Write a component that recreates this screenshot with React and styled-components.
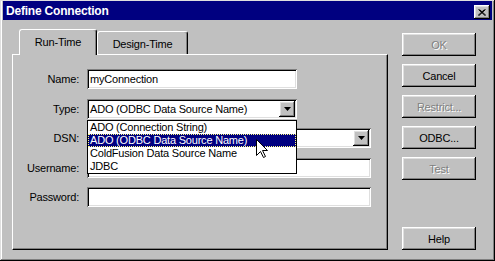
import React from "react"
import styled, { createGlobalStyle, css } from "styled-components"

const GlobalStyle = createGlobalStyle`
  html, body {
    margin: 0;
    padding: 0;
    background: #c0c0c0;
  }
  body {
    font-family: "Liberation Sans", Arial, sans-serif;
    font-size: 11px;
    letter-spacing: -0.2px;
    color: #000;
  }
`

const raised = css`
  background: #c0c0c0;
  box-shadow: inset -1px -1px #000, inset 1px 1px #fff, inset -2px -2px #808080,
    inset 2px 2px #dfdfdf;
`

const sunken = css`
  background: #fff;
  box-shadow: inset 1px 1px #808080, inset -1px -1px #fff, inset 2px 2px #000,
    inset -2px -2px #dfdfdf;
`

const Window = styled.div`
  width: 495px;
  height: 261px;
  box-sizing: border-box;
  padding: 1px 3px 3px 3px;
  background: #c0c0c0;
  display: flex;
  flex-direction: column;
  box-shadow: inset -1px -1px #000, inset 1px 1px #dfdfdf, inset -2px -2px #808080,
    inset 2px 0 #fff;
`

const TitleBar = styled.div`
  height: 19px;
  box-sizing: border-box;
  padding: 2px 0 0 3px;
  background: #000080;
  color: #fff;
  display: flex;
  justify-content: space-between;
  align-items: flex-start;
  font-weight: bold;
  font-size: 12px;
  line-height: 17px;
`

const CloseButton = styled.div`
  ${raised};
  width: 16px;
  height: 14px;
  margin: 2px 2px 0 0;
  display: flex;
  align-items: center;
  justify-content: center;
`

const Body = styled.div`
  flex: 1;
  display: flex;
  padding: 9px 0 8px 9px;
`

const TabArea = styled.div`
  width: 376px;
  display: flex;
  flex-direction: column;
`

const TabRow = styled.div`
  height: 25px;
  display: flex;
  align-items: flex-end;
  padding-left: 7px;
  position: relative;
  z-index: 2;
`

const Tab = styled.div`
  box-sizing: border-box;
  background: #c0c0c0;
  border-top: 1px solid #fff;
  border-left: 1px solid #fff;
  border-right: 1px solid #000;
  border-radius: 3px 3px 0 0;
  box-shadow: inset -1px 0 #808080;
  display: flex;
  align-items: center;
  justify-content: center;
  ${(p) =>
    p.$active
      ? css`
          width: 78px;
          height: 26px;
          margin-bottom: -1px;
          padding-bottom: 1px;
        `
      : css`
          width: 91px;
          height: 23px;
          padding-top: 2px;
        `}
`

const Panel = styled.div`
  flex: 1;
  border-top: 1px solid #fff;
  border-left: 1px solid #fff;
  border-right: 1px solid #000;
  border-bottom: 1px solid #000;
  box-shadow: inset -1px -1px #808080;
  padding-top: 14px;
`

const Form = styled.div`
  display: grid;
  grid-template-columns: 66px auto;
  column-gap: 8px;
  row-gap: 9.5px;
  align-items: center;
  justify-items: start;
`

const Label = styled.div`
  justify-self: end;
`

const Field = styled.div`
  ${sunken};
  position: relative;
  width: ${(p) => p.$w}px;
  height: 20px;
  box-sizing: border-box;
  padding-left: 3px;
  line-height: 20px;
  white-space: nowrap;
`

const DropButton = styled.div`
  ${raised};
  position: absolute;
  right: 2px;
  top: 2px;
  width: 16px;
  height: 16px;
  display: flex;
  align-items: center;
  justify-content: center;
`

const List = styled.div`
  position: absolute;
  left: 0;
  top: calc(100% + 1px);
  width: 210px;
  box-sizing: border-box;
  border: 1px solid #000;
  background: #fff;
  z-index: 5;
`

const Item = styled.div`
  height: 13px;
  line-height: 13px;
  padding-left: 2px;
  ${(p) =>
    p.$selected &&
    css`
      background: #000080;
      color: #fff;
      outline: 1px dotted #ffff80;
      outline-offset: -1px;
    `}
`

const Pointer = styled.svg`
  position: absolute;
  left: 168px;
  top: 18px;
`

const ButtonCol = styled.div`
  width: 74px;
  margin-left: 14px;
  padding-top: 4px;
  display: flex;
  flex-direction: column;
  gap: 8px;
`

const Button = styled.div`
  ${raised};
  height: 23px;
  display: flex;
  align-items: center;
  justify-content: center;
  ${(p) =>
    p.$disabled &&
    css`
      color: #808080;
      text-shadow: 1px 1px #fff;
    `}
  ${(p) => p.$bottom && "margin-top: auto;"}
`

const Arrow = () => (
  <svg width="7" height="4" viewBox="0 0 7 4">
    <polygon points="0,0 7,0 3.5,4" fill="#000" />
  </svg>
)

const options = [
  "ADO (Connection String)",
  "ADO (ODBC Data Source Name)",
  "ColdFusion Data Source Name",
  "JDBC",
]

export default function App() {
  return (
    <>
      <GlobalStyle />
      <Window>
        <TitleBar>
          <span>Define Connection</span>
          <CloseButton>
            <svg width="8" height="7" viewBox="0 0 8 7">
              <path d="M0.5 0.5 L7 6.5 M1.5 0.5 L8 6.5 M6.5 0.5 L0 6.5 M7.5 0.5 L1 6.5" stroke="#000" strokeWidth="1" />
            </svg>
          </CloseButton>
        </TitleBar>
        <Body>
          <TabArea>
            <TabRow>
              <Tab $active>Run-Time</Tab>
              <Tab>Design-Time</Tab>
            </TabRow>
            <Panel>
              <Form>
                <Label>Name:</Label>
                <Field $w={210}>myConnection</Field>
                <Label>Type:</Label>
                <Field $w={210}>
                  ADO (ODBC Data Source Name)
                  <DropButton>
                    <Arrow />
                  </DropButton>
                  <List>
                    {options.map((o) => (
                      <Item key={o} $selected={o === "ADO (ODBC Data Source Name)"}>
                        {o}
                      </Item>
                    ))}
                    <Pointer width="12" height="20" viewBox="0 0 12 20">
                      <polygon
                        points="0.5,0.5 0.5,16.5 4.5,12.5 7.5,18.5 9.5,17.5 6.5,11.5 11.5,11.5"
                        fill="#fff"
                        stroke="#000"
                        strokeWidth="1"
                      />
                    </Pointer>
                  </List>
                </Field>
                <Label>DSN:</Label>
                <Field $w={284}>
                  <DropButton>
                    <Arrow />
                  </DropButton>
                </Field>
                <Label>Username:</Label>
                <Field $w={284} />
                <Label>Password:</Label>
                <Field $w={284} />
              </Form>
            </Panel>
          </TabArea>
          <ButtonCol>
            <Button $disabled>OK</Button>
            <Button>Cancel</Button>
            <Button $disabled>Restrict...</Button>
            <Button>ODBC...</Button>
            <Button $disabled>Test</Button>
            <Button $bottom>Help</Button>
          </ButtonCol>
        </Body>
      </Window>
    </>
  )
}
